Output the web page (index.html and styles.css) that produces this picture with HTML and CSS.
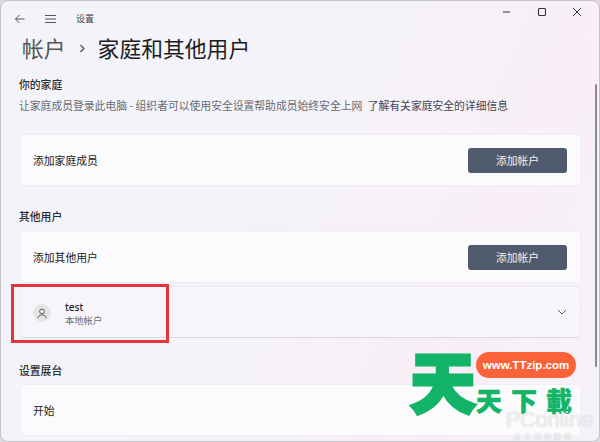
FILE: index.html
```html
<!DOCTYPE html>
<html lang="zh-CN">
<head>
<meta charset="utf-8">
<title>设置</title>
<link rel="stylesheet" href="styles.css">
</head>
<body>
<div class="window">
  <header class="titlebar">
    <svg class="ico back" width="12" height="12" viewBox="0 0 12 12"><path d="M10.5 6H1.5M5.5 2L1.5 6l4 4" fill="none" stroke="#555" stroke-width="1"/></svg>
    <svg class="ico menu" width="13" height="10" viewBox="0 0 13 10"><path d="M1 1.5h11M1 5h11M1 8.5h11" fill="none" stroke="#555" stroke-width="1"/></svg>
    <span class="app">设置</span>
    <div class="controls">
      <svg width="10" height="10" viewBox="0 0 10 10"><path d="M1 5h7" stroke="#333" stroke-width="1.1"/></svg>
      <svg width="10" height="10" viewBox="0 0 10 10"><rect x="1.5" y="1.5" width="7" height="7" rx="1" fill="none" stroke="#333" stroke-width="1.1"/></svg>
      <svg width="10" height="10" viewBox="0 0 10 10"><path d="M1 1l8 8M9 1l-8 8" stroke="#333" stroke-width="1"/></svg>
    </div>
  </header>
  <h1 class="crumb"><span class="parent">帐户</span><svg class="sep" width="7" height="9" viewBox="0 0 7 9"><path d="M1.5 1l3.5 3.5L1.5 8" fill="none" stroke="#444" stroke-width="1.1"/></svg><span>家庭和其他用户</span></h1>
  <main class="content">
    <h2 class="label first">你的家庭</h2>
    <p class="desc">让家庭成员登录此电脑 - 组织者可以使用安全设置帮助成员始终安全上网 <span class="link">了解有关家庭安全的详细信息</span></p>
    <section class="card"><span>添加家庭成员</span><button class="btn">添加帐户</button></section>
    <h2 class="label">其他用户</h2>
    <section class="card"><span>添加其他用户</span><button class="btn">添加帐户</button></section>
    <section class="card user">
      <div class="who">
        <span class="avatar"><svg width="10" height="11" viewBox="0 0 12 13"><circle cx="6" cy="4" r="2.9" fill="none" stroke="#555" stroke-width="1.1"/><path d="M1.2 12.2c0-2.6 1.6-4 4.8-4s4.8 1.4 4.8 4" fill="none" stroke="#555" stroke-width="1.1"/></svg></span>
        <div class="names"><strong>test</strong><small>本地帐户</small></div>
      </div>
      <svg class="chev" width="10" height="6" viewBox="0 0 10 6"><path d="M1 1l4 4 4-4" fill="none" stroke="#555" stroke-width="1"/></svg>
    </section>
    <h2 class="label last">设置展台</h2>
    <section class="card"><span>开始</span></section>
  </main>
  <div class="scrollbar"></div>
  <div class="redbox"></div>
  <div class="wm-big">天</div>
  <div class="wm-pill">www.TTzip.com</div>
  <div class="wm-name">天下載</div>
  <div class="wm-pc">PConline</div>
  <div class="wm-pc-sub">太平洋电脑网</div>
</div>
</body>
</html>
```

FILE: styles.css
```css
* { box-sizing: border-box; }
html, body { margin: 0; padding: 0; }
body {
  width: 600px; height: 442px; overflow: hidden; background: #d9d9de;
  font-family: "Noto Sans CJK SC", "Liberation Sans", sans-serif;
  color: #2a2a2c; font-size: 10.8px;
}
.window {
  position: relative; width: 600px; height: 442px; overflow: hidden;
  border: 1px solid #c4c4c8; border-radius: 8px;
  background: linear-gradient(115deg, #f3f4f9 0%, #f3f3f9 40%, #f9eff6 75%, #f5f2f8 100%);
}
.titlebar { display: flex; align-items: center; height: 35px; padding: 0 0 0 13px; }
.ico { flex: none; }
.menu { margin-left: 18px; }
.app { margin-left: 19px; font-size: 9px; color: #444; }
.controls { margin-left: auto; display: flex; gap: 25px; margin-right: 17px; margin-top: -14px; }
.crumb {
  display: flex; align-items: center; margin: 0 0 0 21px; height: 24px;
  font-size: 21.8px; font-weight: 400; color: #1c1c1e; line-height: 24px;
}
.parent { color: #555; }
.sep { margin: 0 12px 0 13px; }
.content { padding: 0 19px; }
.label { margin: 0 0 0 -1px; font-size: 10.8px; line-height: 16px; font-weight: 500; color: #2c2c2e; height: 45px; padding-top: 22px; }
.label.first { height: 37px; padding: 16px 0 5px; }
.label.last { height: 46px; padding-top: 24px; }
.desc { margin: 0 0 0 -1px; height: 37px; font-size: 10.8px; line-height: 16px; color: #6a6a6e; white-space: nowrap; }
.link { color: #3e4654; margin-left: 3px; }
.card {
  display: flex; align-items: center; justify-content: space-between;
  width: 561px; height: 52px; padding: 0 13px 0 12px;
  background: #fbfbfd; border: 1px solid #efeff3; border-radius: 4px;
  font-size: 10.8px; color: #222;
}
.card + .card { margin-top: 3px; }
.card.user { background: #f7f5f9; border-color: #ecebef; border-bottom-color: #dcdbe0; }
.btn {
  width: 99px; height: 25px; border: 0; border-radius: 3px; background: #4f5b6d; color: #eef0f3;
  font: inherit; font-size: 10.8px; padding: 0;
}
.who { display: flex; align-items: center; gap: 14px; padding-top: 2px; }
.avatar { width: 18px; height: 18px; border-radius: 50%; background: #e4e4e6; display: flex; align-items: center; justify-content: center; }
.names { display: flex; flex-direction: column; }
.names strong { font-family: "Noto Sans", sans-serif; font-size: 10px; line-height: 13px; font-weight: 500; color: #222; }
.names small { font-size: 9.3px; line-height: 12px; color: #6e6e72; }
.scrollbar { position: absolute; left: 594px; top: 83px; width: 2px; height: 283px; border-radius: 1px; background: #8b8a90; }
.redbox { position: absolute; left: 10px; top: 283px; width: 158px; height: 59px; border: 3px solid #e3353a; }
.wm-big {
  position: absolute; left: 407px; top: 333px; width: 70px; height: 90px; font-size: 66px; line-height: 90px;
  font-weight: 900; color: #12b468; -webkit-text-stroke: 3px #12b468; text-align: center;
}
.wm-pill {
  position: absolute; left: 475px; top: 351px; width: 100px; height: 26px; border-radius: 13px; background: #fb6239;
  color: #fff; font-family: "Liberation Sans", sans-serif; font-weight: 700; font-size: 11.5px; line-height: 26px; text-align: center;
}
.wm-name {
  position: absolute; left: 475px; top: 385px; font-size: 26px; line-height: 28px; font-weight: 900;
  color: #12b468; letter-spacing: 9px; white-space: nowrap; -webkit-text-stroke: .5px #12b468;
}
.wm-pc {
  position: absolute; left: 505px; top: 410px; font-family: "Liberation Sans", sans-serif; font-size: 21.5px; line-height: 18px;
  color: rgba(255,255,255,.8); white-space: nowrap; text-shadow: 0 0 1px rgba(120,120,120,.55);
}
.wm-pc-sub { position: absolute; left: 513px; top: 431px; font-size: 7px; line-height: 9px; letter-spacing: 3px; color: rgba(255,255,255,.8); text-shadow: 0 0 1px rgba(120,120,120,.5); white-space: nowrap; }
```
